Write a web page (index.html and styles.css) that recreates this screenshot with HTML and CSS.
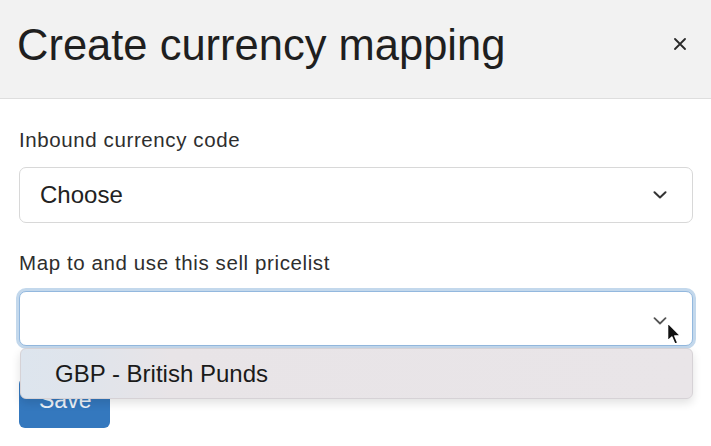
FILE: index.html
```html
<!DOCTYPE html>
<html lang="en">
<head>
<meta charset="utf-8">
<title>Create currency mapping</title>
<link rel="stylesheet" href="styles.css">
</head>
<body>
<div class="modal">
  <div class="modal-header">
    <h1 class="modal-title">Create currency mapping</h1>
    <button class="close" type="button" aria-label="Close">
      <svg width="12" height="12" viewBox="0 0 12 12"><path d="M1 1L11 11M11 1L1 11" stroke="#2a2a2a" stroke-width="1.8" stroke-linecap="round" fill="none"/></svg>
    </button>
  </div>
  <div class="modal-body">
    <div class="field">
      <label class="label">Inbound currency code</label>
      <div class="select">
        <span class="select-value">Choose</span>
        <svg class="chevron" width="14" height="8" viewBox="0 0 14 8"><path d="M1.5 1.2L7 6.5L12.5 1.2" stroke="#333" stroke-width="2" fill="none" stroke-linecap="round" stroke-linejoin="round"/></svg>
      </div>
    </div>
    <div class="field field-second">
      <label class="label">Map to and use this sell pricelist</label>
      <div class="select-wrap">
        <div class="select select-focus">
          <span class="select-value"></span>
          <svg class="chevron chevron-light" width="14" height="8" viewBox="0 0 14 8"><path d="M1.5 1.2L7 6.5L12.5 1.2" stroke="#555" stroke-width="1.8" fill="none" stroke-linecap="round" stroke-linejoin="round"/></svg>
        </div>
        <div class="dropdown">
          <div class="option">GBP - British Punds</div>
        </div>
        <svg class="cursor" width="17" height="26" viewBox="0 0 16 24"><path d="M1.5 1.5L1.5 18.5L5.5 14.8L8.3 21.5L11 20.3L8.3 13.8L13.6 13.6Z" fill="#111" stroke="#fff" stroke-width="1.3" stroke-linejoin="round"/></svg>
      </div>
    </div>
    <button class="btn" type="button">Save</button>
  </div>
</div>
</body>
</html>
```
FILE: styles.css
```css
* { box-sizing: border-box; }
html, body {
  margin: 0;
  padding: 0;
  background: #ffffff;
  font-family: "Liberation Sans", Arial, sans-serif;
  color: #222;
}
.modal { width: 711px; height: 446px; overflow: hidden; }
.modal-header {
  height: 99px;
  background: #f2f2f2;
  border-bottom: 1px solid #dedede;
  display: flex;
  justify-content: space-between;
  align-items: flex-start;
  padding: 23px 25px 0 17px;
}
.modal-title {
  margin: 0;
  font-size: 43.5px;
  line-height: 44px;
  font-weight: 400;
  color: #1f1f1f;
}
.close {
  margin-top: 15px;
  padding: 0;
  border: 0;
  background: transparent;
  width: 12px;
  height: 12px;
  display: flex;
}
.modal-body { padding: 29px 18px 0 19px; }
.field { display: flex; flex-direction: column; gap: 15px; }
.field-second { margin-top: 28px; gap: 16px; }
.label {
  font-size: 20.5px;
  line-height: 24px;
  letter-spacing: 0.6px;
  color: #2e2e2e;
}
.select {
  height: 56px;
  border: 1px solid #d8d8d8;
  border-radius: 7px;
  background: #fff;
  display: flex;
  align-items: center;
  justify-content: space-between;
  padding: 0 25px 0 20px;
}
.select-value { font-size: 24px; color: #222; }
.select-wrap { position: relative; }
.select-focus {
  height: 55px;
  border-color: #93b8de;
  box-shadow: 0 0 0 3px #c3d8ec;
}
.chevron-light { margin-top: 4px; }
.dropdown {
  position: absolute;
  left: 1px;
  right: 0;
  top: 57px;
  height: 51px;
  border-radius: 6px;
  background: linear-gradient(90deg, #dde5ee 0px, #e0e4eb 70px, #e8e4e7 150px, #e9e5e8 100%);
  border: 1px solid #d6d2d6;
  box-shadow: 0 4px 10px rgba(0,0,0,0.12);
  display: flex;
  align-items: center;
  padding-left: 34px;
  z-index: 2;
}
.option { font-size: 24px; color: #1a1a1a; }
.cursor {
  position: absolute;
  left: 647px;
  top: 30px;
  z-index: 3;
}
.btn {
  margin-top: 32px;
  height: 50px;
  padding: 0 19px 6px 20px;
  border: 0;
  border-radius: 6px;
  background: #3478be;
  color: #eef3f9;
  font-family: "Liberation Sans", Arial, sans-serif;
  font-size: 23px;
  display: flex;
  align-items: center;
}
```
